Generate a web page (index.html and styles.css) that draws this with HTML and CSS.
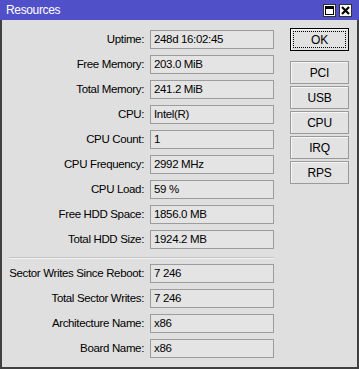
FILE: index.html
```html
<!DOCTYPE html>
<html lang="en">
<head>
  <meta charset="UTF-8" />
  <title>Resources</title>
  <meta name="viewport" content="width=device-width, initial-scale=1.0" />
  <link rel="stylesheet" href="styles.css">
</head>
<body>

  <div class="window">
    <div class="titlebar">
      <span class="title">Resources</span>
      <div class="tb-buttons">
        <span class="tb-btn">
          <svg width="11" height="11" viewBox="0 0 11 11">
            <rect x="1.5" y="1.5" width="8" height="8" fill="none" stroke="#000"/>
            <rect x="1" y="1" width="9" height="3" fill="#000"/>
          </svg>
        </span>
        <span class="tb-btn">
          <svg width="11" height="11" viewBox="0 0 11 11">
            <path d="M2 2 L9 9 M9 2 L2 9" stroke="#000" stroke-width="2.2"/>
          </svg>
        </span>
      </div>
    </div>

    <div class="content">
      <div class="form">
        <div class="grid">
          <label>Uptime:</label><div class="field">248d 16:02:45</div>
          <label>Free Memory:</label><div class="field">203.0 MiB</div>
          <label>Total Memory:</label><div class="field">241.2 MiB</div>
          <label>CPU:</label><div class="field">Intel(R)</div>
          <label>CPU Count:</label><div class="field">1</div>
          <label>CPU Frequency:</label><div class="field">2992 MHz</div>
          <label>CPU Load:</label><div class="field">59 %</div>
          <label>Free HDD Space:</label><div class="field">1856.0 MB</div>
          <label>Total HDD Size:</label><div class="field">1924.2 MB</div>
        </div>

        <div class="sep"></div>

        <div class="grid">
          <label>Sector Writes Since Reboot:</label><div class="field">7 246</div>
          <label>Total Sector Writes:</label><div class="field">7 246</div>
          <label>Architecture Name:</label><div class="field">x86</div>
          <label>Board Name:</label><div class="field">x86</div>
        </div>
      </div>

      <div class="buttons">
        <button class="btn btn-ok">OK</button>
        <button class="btn">PCI</button>
        <button class="btn">USB</button>
        <button class="btn">CPU</button>
        <button class="btn">IRQ</button>
        <button class="btn">RPS</button>
      </div>
    </div>
  </div>

</body>
</html>
```

FILE: styles.css
```css
body {
  margin: 0;
  background: #dfdfdf;
  font-family: "Liberation Sans", Arial, sans-serif;
  font-size: 11.5px;
  letter-spacing: -0.35px;
  color: #000;
}
.window {
  width: 359px;
  height: 369px;
  display: flex;
  flex-direction: column;
}
.titlebar {
  height: 20px;
  background: #5050c8;
  display: flex;
  align-items: center;
  justify-content: space-between;
  padding: 0 7px 0 6px;
}
.title {
  color: #fff;
  font-size: 12px;
}
.tb-buttons {
  display: flex;
  gap: 3px;
}
.tb-btn {
  width: 11px;
  height: 11px;
  background: #fff;
  border: 1px solid #303030;
  display: flex;
}
.content {
  flex: 1;
  display: flex;
  align-items: flex-start;
  border: 2px solid #404040;
  border-top: none;
  padding: 8px 0 0 6px;
}
.grid {
  display: grid;
  grid-template-columns: 136px 124px;
  grid-auto-rows: 19px;
  column-gap: 6px;
  row-gap: 6px;
  align-items: center;
}
.form {
  margin-top: 2px;
}
label {
  text-align: right;
  white-space: nowrap;
  line-height: 19px;
}
.field {
  height: 17px;
  line-height: 17px;
  border: 1px solid #9c9c9c;
  background: #e4e4e4;
  padding-left: 3px;
  white-space: nowrap;
  overflow: hidden;
}
.sep {
  margin: 8px 0 5px 1px;
  border-top: 1px solid #c4c4c4;
  border-bottom: 1px solid #f2f2f2;
}
.buttons {
  margin-left: 16px;
  display: flex;
  flex-direction: column;
  gap: 2px;
}
.btn {
  width: 59px;
  height: 23px;
  font-family: inherit;
  font-size: 12px;
  letter-spacing: -0.2px;
  color: #000;
  background: #e2e2e2;
  border: 1px solid #9a9a9a;
  box-shadow: inset 1px 1px #f6f6f6;
  padding: 0;
}
.btn-ok {
  border-color: #000;
  outline: 1px dotted #000;
  outline-offset: -4px;
  margin-bottom: 8px;
}
```
